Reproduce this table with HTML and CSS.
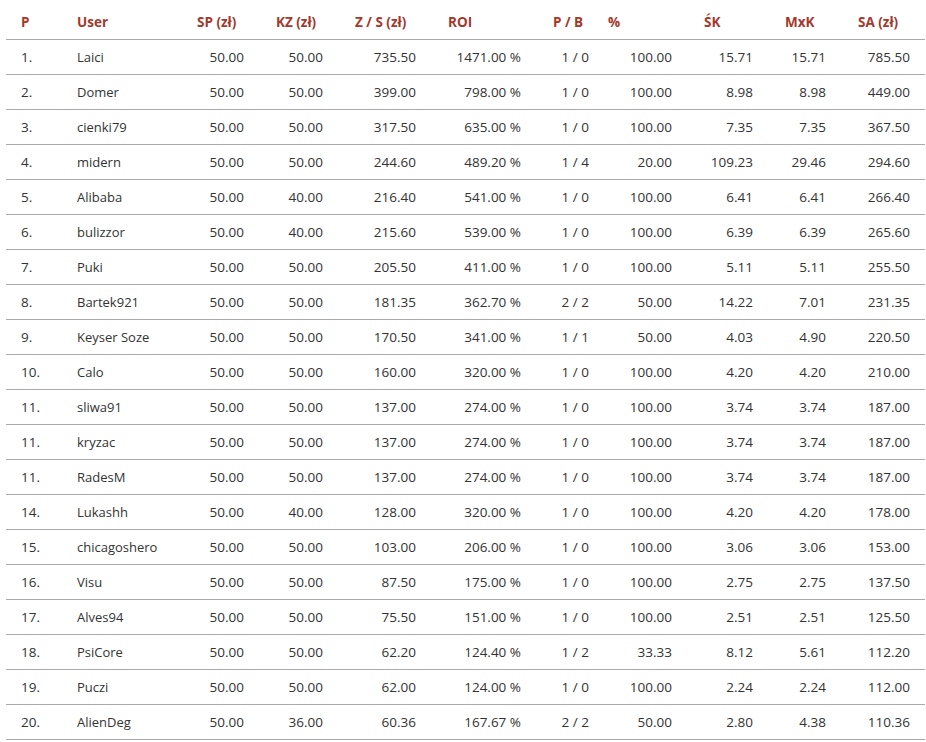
FILE: index.html
```html
<!DOCTYPE html>
<html lang="pl">
<head>
<meta charset="utf-8">
<title>Ranking</title>
<link rel="stylesheet" href="styles.css">
</head>
<body>
<table class="ranking">
  <colgroup>
    <col class="c-p"><col class="c-user"><col class="c-sp"><col class="c-kz"><col class="c-zs"><col class="c-roi"><col class="c-pb"><col class="c-pct"><col class="c-sk"><col class="c-mxk"><col class="c-sa">
  </colgroup>
  <thead>
    <tr>
      <th class="h-left">P</th>
      <th class="h-left">User</th>
      <th>SP (zł)</th>
      <th>KZ (zł)</th>
      <th>Z / S (zł)</th>
      <th>ROI</th>
      <th>P / B</th>
      <th class="h-pct">%</th>
      <th>ŚK</th>
      <th>MxK</th>
      <th>SA (zł)</th>
    </tr>
  </thead>
  <tbody>
    <tr><td class="l">1.</td><td class="l n">Laici</td><td>50.00</td><td>50.00</td><td>735.50</td><td>1471.00 %</td><td>1 / 0</td><td>100.00</td><td>15.71</td><td>15.71</td><td>785.50</td></tr>
    <tr><td class="l">2.</td><td class="l n">Domer</td><td>50.00</td><td>50.00</td><td>399.00</td><td>798.00 %</td><td>1 / 0</td><td>100.00</td><td>8.98</td><td>8.98</td><td>449.00</td></tr>
    <tr><td class="l">3.</td><td class="l n">cienki79</td><td>50.00</td><td>50.00</td><td>317.50</td><td>635.00 %</td><td>1 / 0</td><td>100.00</td><td>7.35</td><td>7.35</td><td>367.50</td></tr>
    <tr><td class="l">4.</td><td class="l n">midern</td><td>50.00</td><td>50.00</td><td>244.60</td><td>489.20 %</td><td>1 / 4</td><td>20.00</td><td>109.23</td><td>29.46</td><td>294.60</td></tr>
    <tr><td class="l">5.</td><td class="l n">Alibaba</td><td>50.00</td><td>40.00</td><td>216.40</td><td>541.00 %</td><td>1 / 0</td><td>100.00</td><td>6.41</td><td>6.41</td><td>266.40</td></tr>
    <tr><td class="l">6.</td><td class="l n">bulizzor</td><td>50.00</td><td>40.00</td><td>215.60</td><td>539.00 %</td><td>1 / 0</td><td>100.00</td><td>6.39</td><td>6.39</td><td>265.60</td></tr>
    <tr><td class="l">7.</td><td class="l n">Puki</td><td>50.00</td><td>50.00</td><td>205.50</td><td>411.00 %</td><td>1 / 0</td><td>100.00</td><td>5.11</td><td>5.11</td><td>255.50</td></tr>
    <tr><td class="l">8.</td><td class="l n">Bartek921</td><td>50.00</td><td>50.00</td><td>181.35</td><td>362.70 %</td><td>2 / 2</td><td>50.00</td><td>14.22</td><td>7.01</td><td>231.35</td></tr>
    <tr><td class="l">9.</td><td class="l n">Keyser Soze</td><td>50.00</td><td>50.00</td><td>170.50</td><td>341.00 %</td><td>1 / 1</td><td>50.00</td><td>4.03</td><td>4.90</td><td>220.50</td></tr>
    <tr><td class="l">10.</td><td class="l n">Calo</td><td>50.00</td><td>50.00</td><td>160.00</td><td>320.00 %</td><td>1 / 0</td><td>100.00</td><td>4.20</td><td>4.20</td><td>210.00</td></tr>
    <tr><td class="l">11.</td><td class="l n">sliwa91</td><td>50.00</td><td>50.00</td><td>137.00</td><td>274.00 %</td><td>1 / 0</td><td>100.00</td><td>3.74</td><td>3.74</td><td>187.00</td></tr>
    <tr><td class="l">11.</td><td class="l n">kryzac</td><td>50.00</td><td>50.00</td><td>137.00</td><td>274.00 %</td><td>1 / 0</td><td>100.00</td><td>3.74</td><td>3.74</td><td>187.00</td></tr>
    <tr><td class="l">11.</td><td class="l n">RadesM</td><td>50.00</td><td>50.00</td><td>137.00</td><td>274.00 %</td><td>1 / 0</td><td>100.00</td><td>3.74</td><td>3.74</td><td>187.00</td></tr>
    <tr><td class="l">14.</td><td class="l n">Lukashh</td><td>50.00</td><td>40.00</td><td>128.00</td><td>320.00 %</td><td>1 / 0</td><td>100.00</td><td>4.20</td><td>4.20</td><td>178.00</td></tr>
    <tr><td class="l">15.</td><td class="l n">chicagoshero</td><td>50.00</td><td>50.00</td><td>103.00</td><td>206.00 %</td><td>1 / 0</td><td>100.00</td><td>3.06</td><td>3.06</td><td>153.00</td></tr>
    <tr><td class="l">16.</td><td class="l n">Visu</td><td>50.00</td><td>50.00</td><td>87.50</td><td>175.00 %</td><td>1 / 0</td><td>100.00</td><td>2.75</td><td>2.75</td><td>137.50</td></tr>
    <tr><td class="l">17.</td><td class="l n">Alves94</td><td>50.00</td><td>50.00</td><td>75.50</td><td>151.00 %</td><td>1 / 0</td><td>100.00</td><td>2.51</td><td>2.51</td><td>125.50</td></tr>
    <tr><td class="l">18.</td><td class="l n">PsiCore</td><td>50.00</td><td>50.00</td><td>62.20</td><td>124.40 %</td><td>1 / 2</td><td>33.33</td><td>8.12</td><td>5.61</td><td>112.20</td></tr>
    <tr><td class="l">19.</td><td class="l n">Puczi</td><td>50.00</td><td>50.00</td><td>62.00</td><td>124.00 %</td><td>1 / 0</td><td>100.00</td><td>2.24</td><td>2.24</td><td>112.00</td></tr>
    <tr><td class="l">20.</td><td class="l n">AlienDeg</td><td>50.00</td><td>36.00</td><td>60.36</td><td>167.67 %</td><td>2 / 2</td><td>50.00</td><td>2.80</td><td>4.38</td><td>110.36</td></tr>
  </tbody>
</table>
</body>
</html>
```
FILE: styles.css
```css
html, body {
  margin: 0;
  padding: 0;
  background: #fff;
}
body {
  padding-left: 6px;
  font-family: "Open Sans", "Liberation Sans", sans-serif;
  font-size: 13.5px;
  color: #333;
}
.ranking {
  border-collapse: collapse;
  table-layout: fixed;
  width: 919px;
}
.c-p { width: 56px; }
.c-user { width: 118px; }
.c-sp { width: 79px; }
.c-kz { width: 79px; }
.c-zs { width: 93px; }
.c-roi { width: 105px; }
.c-pb { width: 68px; }
.c-pct { width: 83px; }
.c-sk { width: 81px; }
.c-mxk { width: 73px; }
.c-sa { width: 84px; }

.ranking th {
  height: 39px;
  padding: 5px 0 0 17px;
  box-sizing: border-box;
  text-align: left;
  font-weight: 700;
  color: #a3392c;
  border-bottom: 1px solid #aaa;
  white-space: nowrap;
}
.ranking th.h-left { padding-left: 15px; }
.ranking th.h-pct { padding-left: 4px; }

.ranking td {
  height: 35px;
  padding: 0 15px 0 0;
  box-sizing: border-box;
  text-align: right;
  border-bottom: 1px solid #aaa;
  white-space: nowrap;
}
.ranking td.l {
  text-align: left;
  padding: 0 0 0 15px;
}
.ranking td.n {
  font-size: 13px;
}
```
